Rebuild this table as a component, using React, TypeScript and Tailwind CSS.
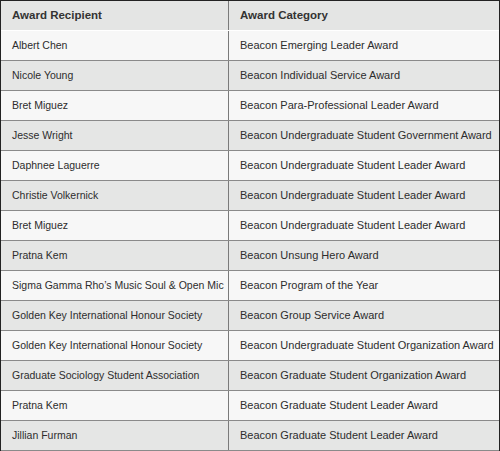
import React from 'react';

const rows: [string, string][] = [
  ['Albert Chen', 'Beacon Emerging Leader Award'],
  ['Nicole Young', 'Beacon Individual Service Award'],
  ['Bret Miguez', 'Beacon Para-Professional Leader Award'],
  ['Jesse Wright', 'Beacon Undergraduate Student Government Award'],
  ['Daphnee Laguerre', 'Beacon Undergraduate Student Leader Award'],
  ['Christie Volkernick', 'Beacon Undergraduate Student Leader Award'],
  ['Bret Miguez', 'Beacon Undergraduate Student Leader Award'],
  ['Pratna Kem', 'Beacon Unsung Hero Award'],
  ['Sigma Gamma Rho’s Music Soul & Open Mic', 'Beacon Program of the Year'],
  ['Golden Key International Honour Society', 'Beacon Group Service Award'],
  ['Golden Key International Honour Society', 'Beacon Undergraduate Student Organization Award'],
  ['Graduate Sociology Student Association', 'Beacon Graduate Student Organization Award'],
  ['Pratna Kem', 'Beacon Graduate Student Leader Award'],
  ['Jillian Furman', 'Beacon Graduate Student Leader Award'],
];

export default function App() {
  return (
    <div className="w-[500px] bg-white font-['Liberation_Sans',Arial,sans-serif] text-[11px] text-[#2d2d2d]">
      <div className="border-l border-r border-t border-[#222]">
        <div className="flex h-[30px] border-b border-white bg-[#e4e5e4] text-[11.5px] font-bold text-[#333]">
          <div className="flex w-[228px] shrink-0 items-center border-r border-[#7a7a7a] pl-[11px]">
            Award Recipient
          </div>
          <div className="flex min-w-0 flex-1 items-center pl-[11px]">Award Category</div>
        </div>
        {rows.map(([name, award], idx) => (
          <div
            key={idx}
            className={`flex h-[30px] border-b border-[#8a8a8a] ${
              idx % 2 === 0 ? 'bg-[#f7f7f7]' : 'bg-[#e5e6e5]'
            }`}
          >
            <div className="flex w-[228px] shrink-0 items-center whitespace-nowrap border-r border-[#7a7a7a] pl-[11px] text-[10.5px]">
              {name}
            </div>
            <div className="flex min-w-0 flex-1 items-center whitespace-nowrap pl-[11px]">
              {award}
            </div>
          </div>
        ))}
      </div>
    </div>
  );
}
